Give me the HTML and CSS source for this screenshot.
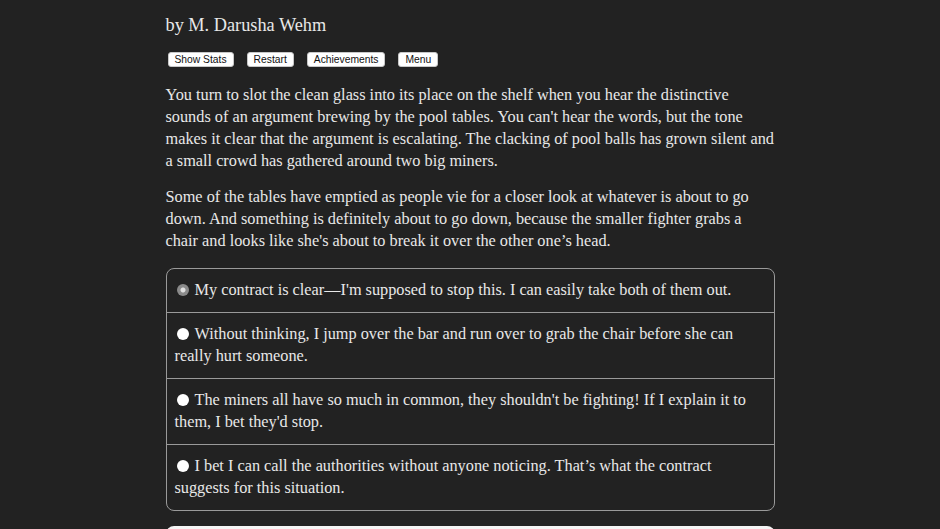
FILE: index.html
```html
<!DOCTYPE html>
<html>
<head>
<meta charset="utf-8">
<link rel="stylesheet" href="styles.css">
</head>
<body>
<div class="page">
  <div class="author">by M. Darusha Wehm</div>
  <div class="buttons">
    <button class="btn">Show Stats</button>
    <button class="btn">Restart</button>
    <button class="btn">Achievements</button>
    <button class="btn">Menu</button>
  </div>
  <p class="para">You turn to slot the clean glass into its place on the shelf when you hear the distinctive<br>sounds of an argument brewing by the pool tables. You can't hear the words, but the tone<br>makes it clear that the argument is escalating. The clacking of pool balls has grown silent and<br>a small crowd has gathered around two big miners.</p>
  <p class="para">Some of the tables have emptied as people vie for a closer look at whatever is about to go<br>down. And something is definitely about to go down, because the smaller fighter grabs a<br>chair and looks like she's about to break it over the other one’s head.</p>
  <div class="choices">
    <label class="choice"><span class="radio selected"></span>My contract is clear—I'm supposed to stop this. I can easily take both of them out.</label>
    <label class="choice"><span class="radio"></span>Without thinking, I jump over the bar and run over to grab the chair before she can<br>really hurt someone.</label>
    <label class="choice"><span class="radio"></span>The miners all have so much in common, they shouldn't be fighting! If I explain it to<br>them, I bet they'd stop.</label>
    <label class="choice"><span class="radio"></span>I bet I can call the authorities without anyone noticing. That’s what the contract<br>suggests for this situation.</label>
  </div>
  <div class="next"></div>
</div>
</body>
</html>
```
FILE: styles.css
```css
html, body {
  margin: 0;
  padding: 0;
  background: #222222;
  height: 100%;
  overflow: hidden;
}
.page {
  width: 609px;
  margin: 0 auto;
  padding-top: 13px;
  color: #e8e8e8;
  font-family: "Liberation Serif", serif;
}
.author {
  font-size: 18.3px;
  line-height: 24px;
}
.buttons {
  display: flex;
  gap: 13px;
  margin-top: 15px;
  margin-left: 2px;
}
.btn {
  font-family: "Liberation Sans", Arial, sans-serif;
  font-size: 10.3px;
  line-height: 13px;
  padding: 0 6px;
  background: #ffffff;
  color: #111;
  border: 1px solid #c8c8c8;
  border-radius: 3px;
}
.para {
  font-size: 16.3px;
  line-height: 22px;
  margin: 17px 0 0 0;
  white-space: nowrap;
}
.para + .para {
  margin-top: 14px;
}
.choices {
  margin-top: 16px;
  border: 1px solid #9a9a9a;
  border-radius: 8px;
  overflow: hidden;
}
.choice {
  display: block;
  padding: 10px 8px 11px;
  font-size: 16.3px;
  line-height: 22px;
  border-top: 1px solid #9a9a9a;
  white-space: nowrap;
}
.choice:first-child {
  border-top: none;
}
.radio {
  display: inline-block;
  width: 12px;
  height: 12px;
  border-radius: 50%;
  background: #ffffff;
  margin: 0 6px 0 2px;
  vertical-align: -1px;
}
.radio.selected {
  background: radial-gradient(circle, #e0e0e0 0 2px, #8a8a8a 3px);
}
.next {
  margin-top: 15px;
  height: 30px;
  background: #f4f4f4;
  border-radius: 8px;
}
```
